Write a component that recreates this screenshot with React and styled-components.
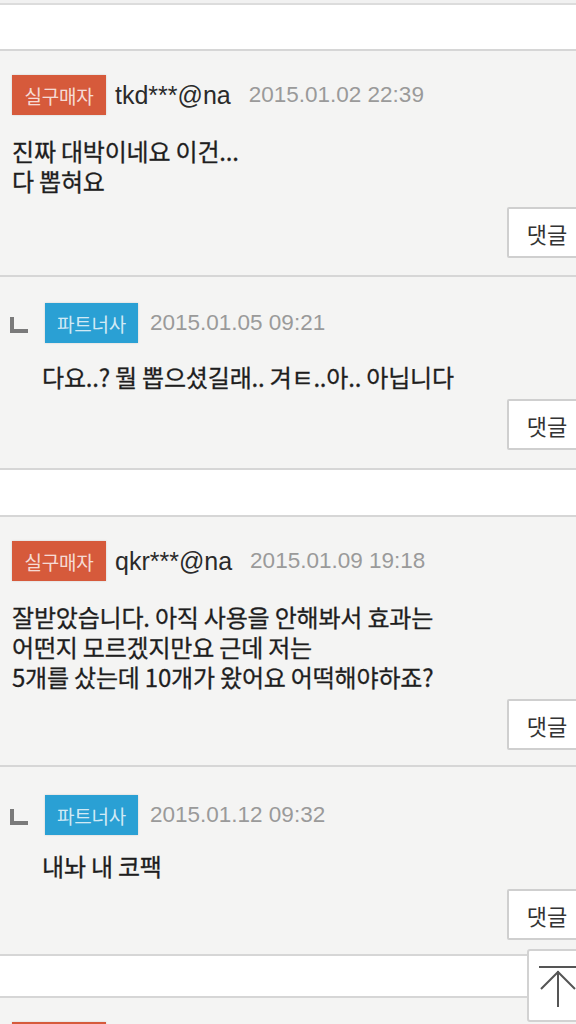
import styled, { createGlobalStyle } from "styled-components";

const GlobalStyle = createGlobalStyle`
  html, body {
    margin: 0;
    padding: 0;
    background: #ffffff;
    overflow-x: hidden;
  }
  body {
    font-family: "Liberation Sans", "Noto Sans CJK KR", sans-serif;
    color: #222;
  }
`;

const Page = styled.div`
  width: 576px;
  overflow: hidden;
`;

const TopStrip = styled.div`
  height: 3px;
  background: #f1f1f1;
  border-bottom: 2px solid #dcdcdc;
`;

const Spacer = styled.div`
  height: ${(p) => p.h}px;
  background: #ffffff;
  border-top: ${(p) => (p.top ? "2px solid #d6d6d6" : "none")};
  border-bottom: 2px solid #d6d6d6;
`;

const Box = styled.section`
  background: #f4f4f3;
  padding: ${(p) => p.pt || 24}px 0 ${(p) => p.pb || 17}px ${(p) => (p.reply ? 10 : 12)}px;
  border-bottom: ${(p) => (p.last ? "none" : "2px solid #d6d6d6")};
`;

const Header = styled.div`
  display: flex;
  align-items: center;
  height: 40px;
`;

const Badge = styled.span`
  display: inline-flex;
  align-items: center;
  justify-content: center;
  height: 40px;
  width: ${(p) => (p.kind === "partner" ? 93 : 94)}px;
  background: ${(p) => (p.kind === "partner" ? "#2aa0d4" : "#d65a3b")};
  color: rgba(255, 255, 255, 0.8);
  font-family: "Noto Sans CJK KR", sans-serif;
  font-size: 19px;
  letter-spacing: -0.2px;
  box-shadow: 0 0 2px rgba(0, 0, 0, 0.15);
`;

const User = styled.span`
  margin-left: 9px;
  font-size: 25px;
  color: #2a2a2a;
`;

const Date = styled.span`
  margin-left: ${(p) => p.gap}px;
  font-size: 22.5px;
  color: #9a9a9a;
`;

const ReplyMark = styled.span`
  width: 14px;
  height: 12px;
  margin: 4px 17px 0 0;
  border-left: 4px solid #7a7a7a;
  border-bottom: 4px solid #7a7a7a;
`;

const Body = styled.p`
  margin: ${(p) => p.mt}px 0 0 ${(p) => (p.reply ? 32 : 0)}px;
  font-family: "Noto Sans CJK KR", sans-serif;
  font-size: 24px;
  line-height: 30px;
  letter-spacing: -0.2px;
  color: #1e1e1e;
  -webkit-text-stroke: 0.3px #1e1e1e;
`;

const Actions = styled.div`
  display: flex;
  justify-content: flex-end;
  margin-top: ${(p) => p.mt}px;
`;

const ReplyButton = styled.button`
  width: 80px;
  height: 51px;
  margin-right: -11px;
  background: #ffffff;
  border: 2px solid #cfcfcf;
  border-radius: 2px;
  font-family: "Noto Sans CJK KR", sans-serif;
  font-size: 22px;
  color: #333;
  padding: 0;
`;

const TopButton = styled.button`
  position: fixed;
  left: 527px;
  top: 949px;
  width: 60px;
  height: 73px;
  background: #ffffff;
  border: 2px solid #d2d2d2;
  border-radius: 3px;
  padding: 0 0 0 8px;
  display: flex;
  align-items: center;
`;

const comments = [
  {
    user: "tkd***@na",
    date: "2015.01.02 22:39",
    lines: ["진짜 대박이네요 이건...", "다 뽑혀요"],
    box: { pt: 24, bodyMt: 21, btnMt: 11, pb: 17 },
    reply: {
      date: "2015.01.05 09:21",
      lines: ["다요..? 뭘 뽑으셨길래.. 겨ㅌ..아.. 아닙니다"],
      box: { pt: 26, bodyMt: 19, btnMt: 7, pb: 18 },
    },
    gap: 45,
  },
  {
    user: "qkr***@na",
    date: "2015.01.09 19:18",
    lines: [
      "잘받았습니다. 아직 사용을 안해봐서 효과는",
      "어떤지 모르겠지만요 근데 저는",
      "5개를 샀는데 10개가 왔어요 어떡해야하죠?",
    ],
    box: { pt: 24, bodyMt: 21, btnMt: 7, pb: 15 },
    reply: {
      date: "2015.01.12 09:32",
      lines: ["내놔 내 코팩"],
      box: { pt: 28, bodyMt: 16, btnMt: 8, pb: 14 },
    },
    gap: 40,
  },
];

const Text = ({ lines, reply, mt }) => (
  <Body reply={reply} mt={mt}>
    {lines.map((l, i) => (
      <span key={i}>
        {l}
        {i < lines.length - 1 && <br />}
      </span>
    ))}
  </Body>
);

const Comment = ({ c }) => (
  <>
    <Box pt={c.box.pt} pb={c.box.pb}>
      <Header>
        <Badge>실구매자</Badge>
        <User>{c.user}</User>
        <Date gap={18}>{c.date}</Date>
      </Header>
      <Text lines={c.lines} mt={c.box.bodyMt} />
      <Actions mt={c.box.btnMt}>
        <ReplyButton>댓글</ReplyButton>
      </Actions>
    </Box>
    <Box reply last pt={c.reply.box.pt} pb={c.reply.box.pb}>
      <Header>
        <ReplyMark />
        <Badge kind="partner">파트너사</Badge>
        <Date gap={12}>{c.reply.date}</Date>
      </Header>
      <Text lines={c.reply.lines} mt={c.reply.box.bodyMt} reply />
      <Actions mt={c.reply.box.btnMt}>
        <ReplyButton>댓글</ReplyButton>
      </Actions>
    </Box>
  </>
);

export default function App() {
  return (
    <Page>
      <GlobalStyle />
      <TopStrip />
      <Spacer h={44} />
      {comments.map((c, i) => (
        <div key={i}>
          <Comment c={c} />
          <Spacer h={c.gap} top />
        </div>
      ))}
      <Box>
        <Header>
          <Badge />
        </Header>
      </Box>
      <TopButton aria-label="맨 위로">
        <svg width="40" height="46" viewBox="0 0 40 46">
          <g stroke="#555" strokeWidth="2" fill="none">
            <line x1="2" y1="4" x2="40" y2="4" />
            <line x1="21" y1="8" x2="21" y2="44" />
            <polyline points="4,26 21,9 38,26" />
          </g>
        </svg>
      </TopButton>
    </Page>
  );
}
